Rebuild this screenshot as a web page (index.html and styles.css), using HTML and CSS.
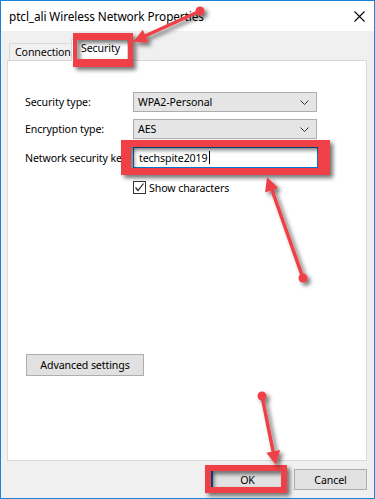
FILE: index.html
```html
<!DOCTYPE html>
<html lang="en">
<head>
  <meta charset="UTF-8">
  <title>ptcl_ali Wireless Network Properties</title>
  <link rel="stylesheet" href="styles.css">
</head>
<body>
  <div class="window">
    <div class="titlebar">
      <span class="title">ptcl_ali Wireless Network Properties</span>
      <svg class="close" width="11" height="11" viewBox="0 0 11 11">
        <path d="M0.5 0.5 L10.5 10.5 M10.5 0.5 L0.5 10.5" stroke="#000" stroke-width="1.1" fill="none"/>
      </svg>
    </div>

    <div class="content">
      <div class="tabs">
        <div class="tab">Connection</div>
        <div class="tab active">Security</div>
      </div>

      <div class="panel">
        <div class="field">
          <span class="label">Security type:</span>
          <div class="select">
            WPA2-Personal
            <svg class="chevron" width="9" height="5" viewBox="0 0 9 5"><path d="M0.5 0.5 L4.5 4.5 L8.5 0.5" stroke="#333" fill="none"/></svg>
          </div>
        </div>
        <div class="field">
          <span class="label">Encryption type:</span>
          <div class="select">
            AES
            <svg class="chevron" width="9" height="5" viewBox="0 0 9 5"><path d="M0.5 0.5 L4.5 4.5 L8.5 0.5" stroke="#333" fill="none"/></svg>
          </div>
        </div>
        <div class="field key">
          <span class="label">Network security key:</span>
          <div class="input">techspite2019<span class="caret"></span></div>
        </div>
        <div class="check-row">
          <span class="checkbox">
            <svg width="11" height="11" viewBox="0 0 11 11"><path d="M1.5 5.5 L4 8.5 L9.5 1.5" stroke="#222" stroke-width="1.2" fill="none"/></svg>
          </span>
          Show characters
        </div>
        <button class="btn adv">Advanced settings</button>
      </div>

      <div class="footer">
        <button class="btn ok">OK</button>
        <button class="btn">Cancel</button>
      </div>
    </div>

    <!-- screenshot annotations drawn on top -->
    <svg class="marks" width="375" height="499" viewBox="0 0 375 499">
      <defs>
        <filter id="shade" x="-20%" y="-20%" width="140%" height="140%">
          <feDropShadow dx="3" dy="3" stdDeviation="2" flood-color="#000" flood-opacity="0.55"/>
        </filter>
      </defs>
      <g fill="#ef4147" filter="url(#shade)">
        <path fill-rule="evenodd" d="M73 33 H133 V67 H73 Z M77 40 V59 H128 V40 Z"/>
        <path fill-rule="evenodd" d="M121 140 H330 V175 H121 Z M131 147 V168 H318 V147 Z"/>
        <path fill-rule="evenodd" d="M205 465 H287 V493 H205 Z M211 471 V487 H281 V471 Z"/>
      </g>
      <g stroke="#ef4147" stroke-width="3.5" stroke-linecap="round" fill="#ef4147" filter="url(#shade)">
        <line x1="200" y1="11" x2="145" y2="36"/>
        <circle cx="200" cy="11" r="4.5" stroke="none"/>
        <polygon points="133,42 142.8,29.7 148.6,42.5" stroke="none"/>

        <line x1="303" y1="278" x2="272" y2="190"/>
        <circle cx="303" cy="278" r="4.5" stroke="none"/>
        <polygon points="267,177 278.3,187.9 265.1,192.5" stroke="none"/>

        <line x1="262" y1="396" x2="273" y2="451"/>
        <circle cx="262" cy="396" r="4.5" stroke="none"/>
        <polygon points="276,465 266.3,452.7 280.1,449.9" stroke="none"/>
      </g>
    </svg>
  </div>
</body>
</html>
```

FILE: styles.css
```css
* {
  box-sizing: border-box;
}
body {
  margin: 0;
  font-family: "Noto Sans", sans-serif;
  font-size: 10.6px;
  letter-spacing: -0.1px;
  color: #000;
  background: #fff;
}
.window {
  position: relative;
  width: 375px;
  height: 499px;
  border: 1px solid #1883d7;
  display: flex;
  flex-direction: column;
}
.titlebar {
  height: 30px;
  background: #fff;
  display: flex;
  align-items: center;
  justify-content: space-between;
  padding: 0 9px 0 8px;
}
.title {
  font-size: 11.8px;
  letter-spacing: -0.1px;
}
.content {
  flex: 1;
  background: #f0f0f0;
  padding: 8px 7px 0 6px;
  display: flex;
  flex-direction: column;
}
.tabs {
  display: flex;
  align-items: flex-end;
  height: 21px;
  padding-left: 2px;
}
.tab {
  width: 63px;
  height: 17px;
  padding-left: 5px;
  border: 1px solid #d9d9d9;
  border-bottom: none;
  line-height: 16px;
  white-space: nowrap;
  background: #f0f0f0;
}
.tab.active {
  width: 57px;
  height: 22px;
  margin-bottom: -1px;
  margin-left: -1px;
  padding-left: 9px;
  line-height: 16px;
  background: #fff;
  position: relative;
}
.panel {
  height: 401px;
  background: #fff;
  border: 1px solid #d9d9d9;
  padding: 31px 0 0 17px;
  display: flex;
  flex-direction: column;
}
.field {
  display: flex;
  align-items: center;
  height: 20px;
  margin-bottom: 7px;
}
.field.key {
  height: 21px;
  margin: 1px 0 0;
}
.label {
  width: 108px;
  white-space: nowrap;
  overflow: hidden;
}
.select {
  width: 184px;
  height: 20px;
  background: #e5e5e5;
  border: 1px solid #adadad;
  padding: 0 4px;
  display: flex;
  align-items: center;
  justify-content: space-between;
}
.chevron {
  margin-right: 3px;
}
.input {
  width: 185px;
  height: 21px;
  border: 1px solid #0078d7;
  padding: 0 5px;
  display: flex;
  align-items: center;
}
.caret {
  width: 1px;
  height: 13px;
  background: #000;
  margin-left: 1px;
}
.check-row {
  display: flex;
  align-items: center;
  gap: 3px;
  height: 13px;
  margin: 13px 0 0 108px;
}
.checkbox {
  width: 13px;
  height: 13px;
  border: 1px solid #333;
  display: flex;
  align-items: center;
  justify-content: center;
}
.btn {
  font-family: "Noto Sans", sans-serif;
  font-size: 10.6px;
  letter-spacing: -0.1px;
  color: #000;
  background: #e1e1e1;
  border: 1px solid #adadad;
  height: 21px;
  padding: 0;
}
.adv {
  align-self: flex-start;
  width: 118px;
  height: 22px;
  margin: 160px 0 0 1px;
}
.footer {
  display: flex;
  justify-content: flex-end;
  gap: 10px;
  padding-top: 8px;
}
.footer .btn {
  width: 73px;
}
.ok {
  border: 2px solid #0078d7;
}
.marks {
  position: absolute;
  left: -1px;
  top: -1px;
}
```
